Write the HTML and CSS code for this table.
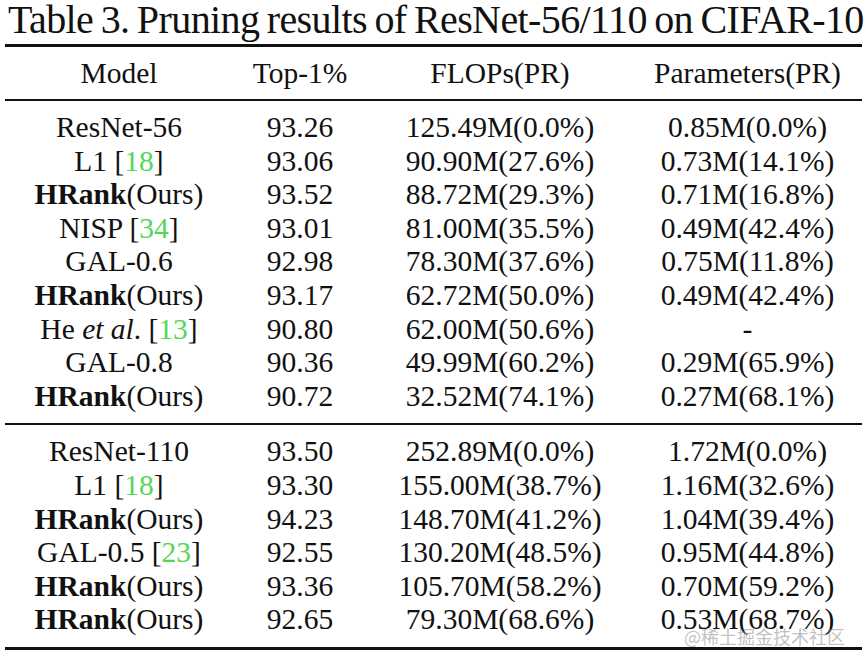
FILE: index.html
```html
<!DOCTYPE html>
<html lang="en">
<head>
<meta charset="utf-8">
<title>Table 3</title>
<link rel="stylesheet" href="styles.css">
</head>
<body>
<div class="page">
  <h1 class="caption">Table 3. Pruning results of ResNet-56/110 on CIFAR-10.</h1>
  <table class="results">
    <colgroup>
      <col class="c-model"><col class="c-top"><col class="c-flops"><col class="c-params">
    </colgroup>
    <thead>
      <tr><th>Model</th><th>Top-1%</th><th>FLOPs(PR)</th><th>Parameters(PR)</th></tr>
    </thead>
    <tbody class="group">
      <tr><td>ResNet-56</td><td>93.26</td><td>125.49M(0.0%)</td><td>0.85M(0.0%)</td></tr>
      <tr><td>L1 [<span class="cite">18</span>]</td><td>93.06</td><td>90.90M(27.6%)</td><td>0.73M(14.1%)</td></tr>
      <tr><td><b>HRank</b>(Ours)</td><td>93.52</td><td>88.72M(29.3%)</td><td>0.71M(16.8%)</td></tr>
      <tr><td>NISP [<span class="cite">34</span>]</td><td>93.01</td><td>81.00M(35.5%)</td><td>0.49M(42.4%)</td></tr>
      <tr><td>GAL-0.6</td><td>92.98</td><td>78.30M(37.6%)</td><td>0.75M(11.8%)</td></tr>
      <tr><td><b>HRank</b>(Ours)</td><td>93.17</td><td>62.72M(50.0%)</td><td>0.49M(42.4%)</td></tr>
      <tr><td>He <i>et al</i>. [<span class="cite">13</span>]</td><td>90.80</td><td>62.00M(50.6%)</td><td>-</td></tr>
      <tr><td>GAL-0.8</td><td>90.36</td><td>49.99M(60.2%)</td><td>0.29M(65.9%)</td></tr>
      <tr><td><b>HRank</b>(Ours)</td><td>90.72</td><td>32.52M(74.1%)</td><td>0.27M(68.1%)</td></tr>
    </tbody>
    <tbody class="group">
      <tr><td>ResNet-110</td><td>93.50</td><td>252.89M(0.0%)</td><td>1.72M(0.0%)</td></tr>
      <tr><td>L1 [<span class="cite">18</span>]</td><td>93.30</td><td>155.00M(38.7%)</td><td>1.16M(32.6%)</td></tr>
      <tr><td><b>HRank</b>(Ours)</td><td>94.23</td><td>148.70M(41.2%)</td><td>1.04M(39.4%)</td></tr>
      <tr><td>GAL-0.5 [<span class="cite">23</span>]</td><td>92.55</td><td>130.20M(48.5%)</td><td>0.95M(44.8%)</td></tr>
      <tr><td><b>HRank</b>(Ours)</td><td>93.36</td><td>105.70M(58.2%)</td><td>0.70M(59.2%)</td></tr>
      <tr><td><b>HRank</b>(Ours)</td><td>92.65</td><td>79.30M(68.6%)</td><td>0.53M(68.7%)</td></tr>
    </tbody>
  </table>
  <div class="watermark">@稀土掘金技术社区</div>
</div>
</body>
</html>
```
FILE: styles.css
```css
html, body {
  margin: 0;
  padding: 0;
  background: #fff;
}
body {
  overflow: hidden;
  font-family: "Liberation Serif", "Times New Roman", serif;
  color: #111;
}
.page {
  position: relative;
  width: 866px;
  height: 665px;
  overflow: hidden;
}
.caption {
  margin: 0 0 5px 8px;
  font-size: 40px;
  font-weight: normal;
  line-height: 39px;
  letter-spacing: -0.6px;
  word-spacing: -2px;
  white-space: nowrap;
}
.results {
  margin-left: 5px;
  width: 857px;
  border-collapse: collapse;
  table-layout: fixed;
  font-size: 29.5px;
  border-top: 3px solid #111;
  border-bottom: 3px solid #111;
}
.c-model { width: 228px; }
.c-top { width: 134px; }
.c-flops { width: 266px; }
.c-params { width: 229px; }
.results th {
  font-weight: normal;
  height: 52px;
  padding: 0;
  text-align: center;
  white-space: nowrap;
}
.results thead {
  border-bottom: 2px solid #111;
}
.results td {
  padding: 0;
  line-height: 33.6px;
  text-align: center;
  white-space: nowrap;
}
.group + .group {
  border-top: 2px solid #111;
}
.group tr:first-child td { padding-top: 10px; }
.group tr:last-child td { padding-bottom: 10px; }
.cite { color: #55d655; }
.results b { font-weight: bold; }
.watermark {
  position: absolute;
  left: 684px;
  top: 624px;
  font-family: "Noto Sans CJK SC", sans-serif;
  font-size: 18px;
  line-height: 24px;
  color: rgba(140, 140, 140, 0.55);
  white-space: nowrap;
}
```
